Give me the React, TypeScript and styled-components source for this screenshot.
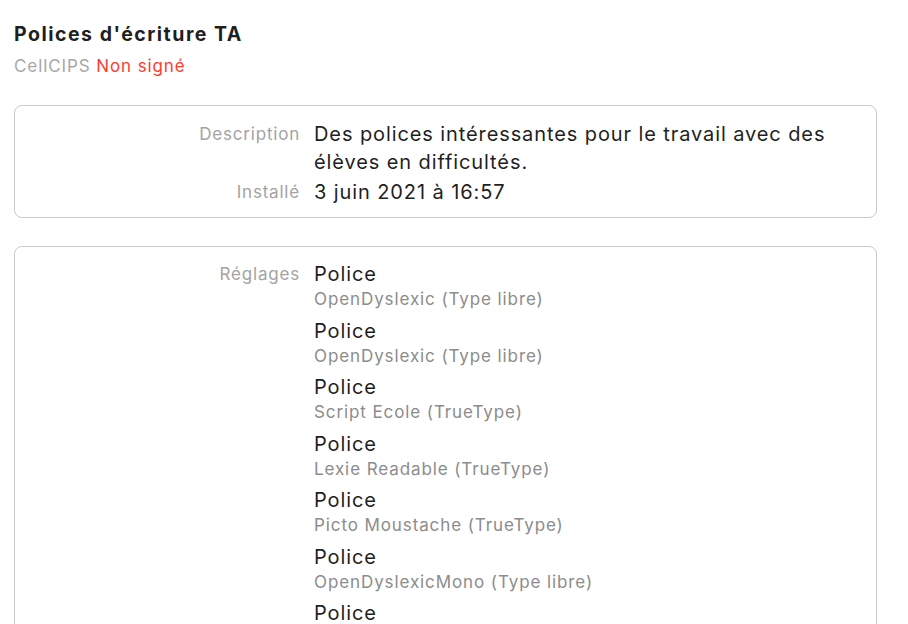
import React from 'react';
import styled, { createGlobalStyle } from 'styled-components';

const GlobalStyle = createGlobalStyle`
    html, body {
        margin: 0;
        padding: 0;
        background: #ffffff;
    }
    body {
        font-family: Inter, 'Noto Sans', 'Liberation Sans', sans-serif;
        color: #1d1d1f;
        -webkit-font-smoothing: antialiased;
    }
`;

const Page = styled.div`
    width: 908px;
    height: 624px;
    overflow: hidden;
    padding: 22px 31px 0 14px;
    box-sizing: border-box;
`;

const Title = styled.h1`
    margin: 0;
    font-size: 19.5px;
    line-height: 24px;
    font-weight: 700;
    color: #1f1f1f;
    letter-spacing: 1.5px;
`;

const Subtitle = styled.div`
    margin-top: 9px;
    font-size: 17px;
    line-height: 22px;
    letter-spacing: 0.9px;
    color: #a8a8a8;
`;

const Unsigned = styled.span`
    color: #ff3b30;
`;

const Card = styled.section<{ $rowGap?: number }>`
    margin-top: 28px;
    border: 1px solid #cbcbcb;
    border-radius: 8px;
    padding: 14px 0 11px;
    display: grid;
    grid-template-columns: 285px 1fr;
    column-gap: 14px;
    row-gap: ${(p) => p.$rowGap ?? 2}px;
`;

const Label = styled.div<{ $lineHeight?: number }>`
    text-align: right;
    font-size: 17px;
    line-height: ${(p) => p.$lineHeight ?? 28}px;
    letter-spacing: 0.8px;
    color: #a3a3a3;
`;

const Value = styled.div`
    font-size: 20px;
    line-height: 28px;
    letter-spacing: 0.9px;
    color: #1f1f1f;
    padding-right: 30px;
`;

const SettingList = styled.div`
    display: flex;
    flex-direction: column;
    gap: 5.5px;
`;

const Setting = styled.div`
    display: flex;
    flex-direction: column;
`;

const SettingName = styled.div`
    font-size: 20px;
    line-height: 26px;
    letter-spacing: 0.9px;
    color: #1f1f1f;
`;

const SettingDetail = styled.div`
    font-size: 17px;
    line-height: 25px;
    letter-spacing: 0.9px;
    color: #8c8c8c;
`;

const fonts = [
    'OpenDyslexic (Type libre)',
    'OpenDyslexic (Type libre)',
    'Script Ecole (TrueType)',
    'Lexie Readable (TrueType)',
    'Picto Moustache (TrueType)',
    'OpenDyslexicMono (Type libre)',
    'OpenDyslexicAlta (Type libre)',
];

const App: React.FC = () => {
    return (
        <Page>
            <GlobalStyle />
            <Title>Polices d'écriture TA</Title>
            <Subtitle>
                CellCIPS <Unsigned>Non signé</Unsigned>
            </Subtitle>

            <Card>
                <Label>Description</Label>
                <Value>Des polices intéressantes pour le travail avec des élèves en difficultés.</Value>
                <Label>Installé</Label>
                <Value>3 juin 2021 à 16:57</Value>
            </Card>

            <Card>
                <Label $lineHeight={26}>Réglages</Label>
                <SettingList>
                    {fonts.map((f, i) => (
                        <Setting key={i}>
                            <SettingName>Police</SettingName>
                            <SettingDetail>{f}</SettingDetail>
                        </Setting>
                    ))}
                </SettingList>
            </Card>
        </Page>
    );
};

export default App;
